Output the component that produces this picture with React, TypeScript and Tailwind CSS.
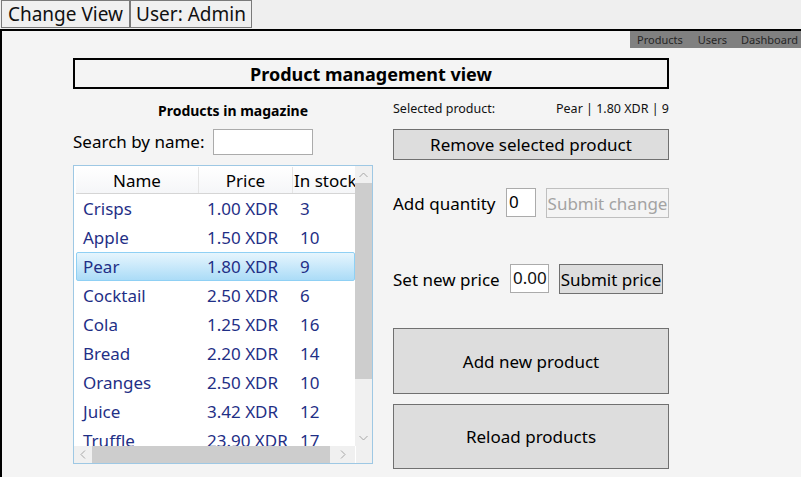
import React from "react";

const rows: [string, string, string][] = [
  ["Crisps", "1.00 XDR", "3"],
  ["Apple", "1.50 XDR", "10"],
  ["Pear", "1.80 XDR", "9"],
  ["Cocktail", "2.50 XDR", "6"],
  ["Cola", "1.25 XDR", "16"],
  ["Bread", "2.20 XDR", "14"],
  ["Oranges", "2.50 XDR", "10"],
  ["Juice", "3.42 XDR", "12"],
  ["Truffle", "23.90 XDR", "17"],
];

function Chevron({ dir }: { dir: "up" | "down" | "left" | "right" }) {
  if (dir === "up" || dir === "down") {
    const d = dir === "up" ? "M0.5 5 L4.5 1 L8.5 5" : "M0.5 1 L4.5 5 L8.5 1";
    return (
      <svg width="9" height="6" viewBox="0 0 9 6">
        <path d={d} fill="none" stroke="#a6a6a6" strokeWidth="1" />
      </svg>
    );
  }
  const d = dir === "left" ? "M5 0.5 L1 4.5 L5 8.5" : "M1 0.5 L5 4.5 L1 8.5";
  return (
    <svg width="6" height="9" viewBox="0 0 6 9">
      <path d={d} fill="none" stroke="#a6a6a6" strokeWidth="1" />
    </svg>
  );
}

export default function App() {
  return (
    <div className="w-[801px] h-[477px] overflow-hidden bg-[#efefef] text-black font-['Noto_Sans',sans-serif]">
      {/* top tabs */}
      <div className="h-[29px] flex items-start pl-px">
        <div className="h-[28px] w-[129px] border border-[#7a7a7a] bg-[#f0f0f0] flex items-center justify-center text-[19px] leading-none text-[#111]">
          Change View
        </div>
        <div className="h-[28px] w-[122px] border border-[#7a7a7a] bg-[#f0f0f0] flex items-center justify-center text-[19px] leading-none text-[#111]">
          User: Admin
        </div>
      </div>

      {/* content panel */}
      <div className="h-[448px] border-l-2 border-t-2 border-black bg-[#f4f4f4] flex flex-col">
        <div className="flex justify-end">
          <div className="w-[171px] h-[17px] bg-[#808080] flex items-center pl-[7px] text-[11px] leading-none text-[#262626]">
            <span>Products</span>
            <span className="ml-[15px]">Users</span>
            <span className="ml-[14px]">Dashboard</span>
          </div>
        </div>

        <div className="ml-[71px] mt-[10px] w-[596px]">
          <div className="h-[31px] border-2 border-black flex items-center justify-center font-bold text-[18px] leading-none">
            Product management view
          </div>

          <div className="flex gap-[20px]">
            {/* left column */}
            <div className="w-[300px] flex flex-col">
              <div className="mt-[12px] h-[20px] pl-[20px] text-center font-bold text-[14px] leading-[20px]">
                Products in magazine
              </div>
              <div className="mt-[8px] h-[26px] flex items-center">
                <div className="w-[140px] text-[17px] leading-[26px]">Search by name:</div>
                <div className="w-[100px] h-[26px] bg-white border border-[#ababab]" />
              </div>

              {/* list */}
              <div className="mt-[10px] h-[299px] border border-[#9ec8e4] bg-white flex flex-col overflow-hidden">
                <div className="flex h-[280px] shrink-0">
                  <div className="w-[281px] h-[280px] pl-[2px] pt-[1px] overflow-hidden flex flex-col">
                    <div className="flex h-[27px] shrink-0 border-b border-[#d5d5d5] bg-gradient-to-b from-white to-[#f5f6f8] text-[17px] leading-none">
                      <div className="w-[123px] shrink-0 flex items-center justify-center border-r border-[#e5e5e5]">Name</div>
                      <div className="w-[94px] shrink-0 flex items-center justify-center border-r border-[#e5e5e5]">Price</div>
                      <div className="w-[70px] shrink-0 flex items-center pl-[1px] whitespace-nowrap">In stock</div>
                    </div>
                    <div className="flex flex-col shrink-0">
                      {rows.map(([n, p, s], i) => {
                        const sel = i === 2;
                        return (
                          <div
                            key={n}
                            className={
                              "flex h-[29px] shrink-0 items-center text-[17px] leading-none text-[#1f2f86] whitespace-nowrap " +
                              (sel
                                ? "border border-[#8fd0f4] rounded-[2px] bg-gradient-to-b from-[#e6f5fd] to-[#abdcf7]"
                                : "border border-transparent")
                            }
                          >
                            <div className="w-[123px] shrink-0 pl-[6px]">{n}</div>
                            <div className="w-[94px] shrink-0 pl-[7px]">{p}</div>
                            <div className="w-[60px] shrink-0 pl-[6px]">{s}</div>
                          </div>
                        );
                      })}
                    </div>
                  </div>
                  {/* vertical scrollbar */}
                  <div className="w-[17px] h-[280px] bg-[#f0f0f0] flex flex-col items-center">
                    <div className="h-[17px] shrink-0 flex items-center justify-center">
                      <Chevron dir="up" />
                    </div>
                    <div className="w-[17px] h-[196px] shrink-0 bg-[#cdcdcd]" />
                    <div className="flex-1" />
                    <div className="h-[17px] shrink-0 flex items-center justify-center">
                      <Chevron dir="down" />
                    </div>
                  </div>
                </div>
                {/* horizontal scrollbar */}
                <div className="flex h-[17px] shrink-0">
                  <div className="w-[281px] bg-[#f0f0f0] flex items-center">
                    <div className="w-[18px] flex justify-center">
                      <Chevron dir="left" />
                    </div>
                    <div className="w-[238px] h-[17px] bg-[#cdcdcd]" />
                    <div className="flex-1 flex justify-center">
                      <Chevron dir="right" />
                    </div>
                  </div>
                  <div className="w-[17px] bg-[#f0f0f0] border-l border-white" />
                </div>
              </div>
            </div>

            {/* right column */}
            <div className="w-[276px] flex flex-col">
              <div className="mt-[12px] h-[16px] flex justify-between items-center text-[12.5px] leading-[16px] text-[#111]">
                <span>Selected product:</span>
                <span>Pear | 1.80 XDR | 9</span>
              </div>
              <div className="mt-[12px] h-[31px] bg-[#dddddd] border border-[#707070] flex items-center justify-center text-[17px] leading-none">
                Remove selected product
              </div>

              <div className="mt-[28px] h-[30px] flex items-start">
                <div className="w-[113px] h-[30px] flex items-center text-[17px] leading-none">Add quantity</div>
                <div className="w-[30px] h-[29px] bg-white border border-[#ababab] pl-[2px] pt-[3px] text-[17px] leading-[20px]">0</div>
                <div className="ml-[10px] w-[123px] h-[30px] border border-[#bfbfbf] bg-[#f4f4f4] text-[#a3a3a3] flex items-center justify-center text-[17px] leading-none whitespace-nowrap">
                  Submit change
                </div>
              </div>

              <div className="mt-[46px] h-[30px] flex items-start">
                <div className="w-[117px] h-[30px] flex items-center text-[17px] leading-none">Set new price</div>
                <div className="w-[39px] h-[29px] bg-white border border-[#ababab] pl-[2px] pt-[3px] text-[17px] leading-[20px] text-[#111]">0.00</div>
                <div className="ml-[10px] w-[104px] h-[30px] bg-[#dddddd] border border-[#707070] flex items-center justify-center text-[17px] leading-none whitespace-nowrap">
                  Submit price
                </div>
              </div>

              <div className="mt-[34px] h-[66px] bg-[#dddddd] border border-[#707070] flex items-center justify-center text-[17px] leading-none">
                Add new product
              </div>
              <div className="mt-[10px] h-[65px] bg-[#dddddd] border border-[#707070] flex items-center justify-center text-[17px] leading-none">
                Reload products
              </div>
            </div>
          </div>
        </div>
      </div>
    </div>
  );
}
